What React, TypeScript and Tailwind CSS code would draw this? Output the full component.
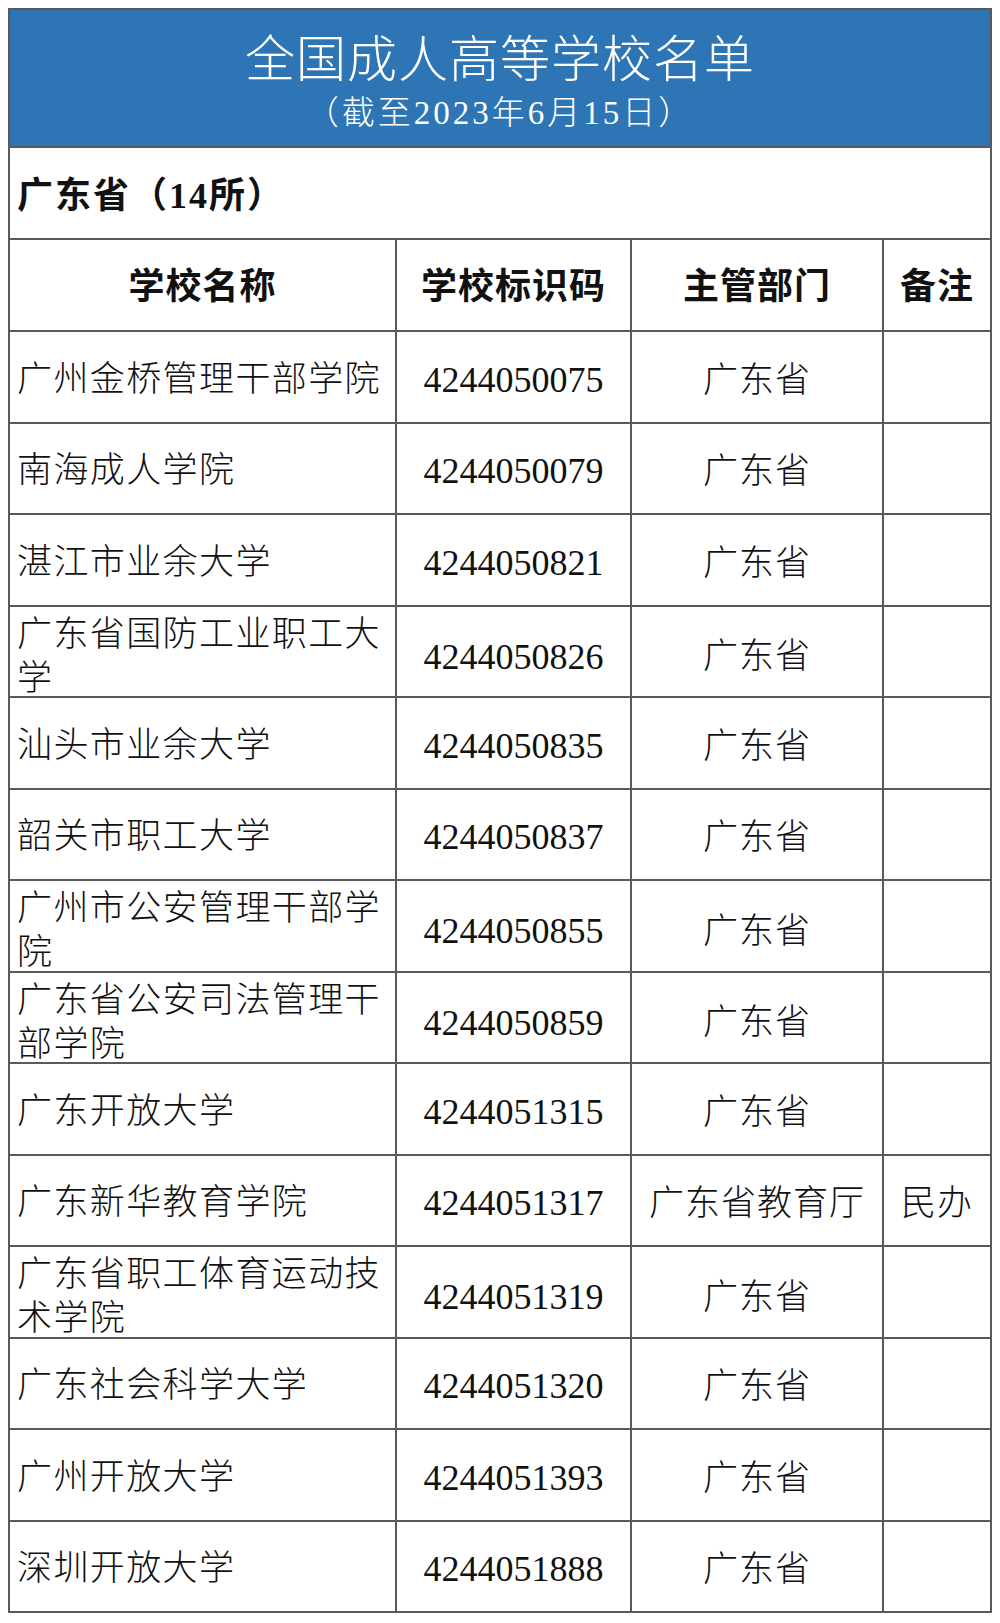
import React from "react";

type Row = { name: string; code: string; dept: string; note?: string };

const rows: Row[] = [
  { name: "广州金桥管理干部学院", code: "4244050075", dept: "广东省" },
  { name: "南海成人学院", code: "4244050079", dept: "广东省" },
  { name: "湛江市业余大学", code: "4244050821", dept: "广东省" },
  { name: "广东省国防工业职工大学", code: "4244050826", dept: "广东省" },
  { name: "汕头市业余大学", code: "4244050835", dept: "广东省" },
  { name: "韶关市职工大学", code: "4244050837", dept: "广东省" },
  { name: "广州市公安管理干部学院", code: "4244050855", dept: "广东省" },
  { name: "广东省公安司法管理干部学院", code: "4244050859", dept: "广东省" },
  { name: "广东开放大学", code: "4244051315", dept: "广东省" },
  { name: "广东新华教育学院", code: "4244051317", dept: "广东省教育厅", note: "民办" },
  { name: "广东省职工体育运动技术学院", code: "4244051319", dept: "广东省" },
  { name: "广东社会科学大学", code: "4244051320", dept: "广东省" },
  { name: "广州开放大学", code: "4244051393", dept: "广东省" },
  { name: "深圳开放大学", code: "4244051888", dept: "广东省" },
];

const FONT = { fontFamily: '"Liberation Serif", "Noto Sans CJK SC", serif' };

export default function App() {
  return (
    <div className="w-[1000px] h-[1623px] bg-white pt-[8px] pl-[8px]" style={FONT}>
      <div className="w-[984px] border-2 border-[#5a5a5a] text-[#111]">
        {/* Title */}
        <div className="h-[136px] bg-[#2e75b6] flex flex-col items-center text-white pt-[22px]">
          <div className="text-[50px] leading-[56px] tracking-[1px] font-light">全国成人高等学校名单</div>
          <div className="text-[33px] leading-[40px] mt-[5px] tracking-[3px] font-light">（截至2023年6月15日）</div>
        </div>
        {/* Province */}
        <div className="h-[92px] border-t-2 border-[#5a5a5a] flex items-center pl-[7px] pt-[5px]">
          <span className="text-[36px] font-bold tracking-[2px]">广东省（14所）</span>
        </div>
        {/* Header */}
        <div className="h-[92px] border-t-2 border-[#5a5a5a] grid grid-cols-[385px_235px_252px_108px] font-bold text-[36px]">
          <div className="flex items-center justify-center pt-[4px] tracking-[1px]">学校名称</div>
          <div className="flex items-center justify-center pt-[4px] border-l-2 border-[#5a5a5a] tracking-[1px]">学校标识码</div>
          <div className="flex items-center justify-center pt-[4px] border-l-2 border-[#5a5a5a] tracking-[1px]">主管部门</div>
          <div className="flex items-center justify-center pt-[4px] border-l-2 border-[#5a5a5a] tracking-[1px]">备注</div>
        </div>
        {rows.map((r) => (
          <div
            key={r.code}
            className="h-[91.5px] border-t-2 border-[#5a5a5a] grid grid-cols-[385px_235px_252px_108px]"
          >
            <div className="flex items-center pl-[7px] pt-[6px] text-[35px] leading-[44px] tracking-[1.4px] font-light">
              <span>{r.name}</span>
            </div>
            <div className="flex items-center justify-center pt-[6px] border-l-2 border-[#5a5a5a] text-[36px]">
              {r.code}
            </div>
            <div className="flex items-center justify-center pt-[8px] border-l-2 border-[#5a5a5a] text-[35px] tracking-[1px] font-light">
              {r.dept}
            </div>
            <div className="flex items-center justify-center pt-[8px] border-l-2 border-[#5a5a5a] text-[35px] tracking-[1px] font-light">
              {r.note ?? ""}
            </div>
          </div>
        ))}
      </div>
    </div>
  );
}
